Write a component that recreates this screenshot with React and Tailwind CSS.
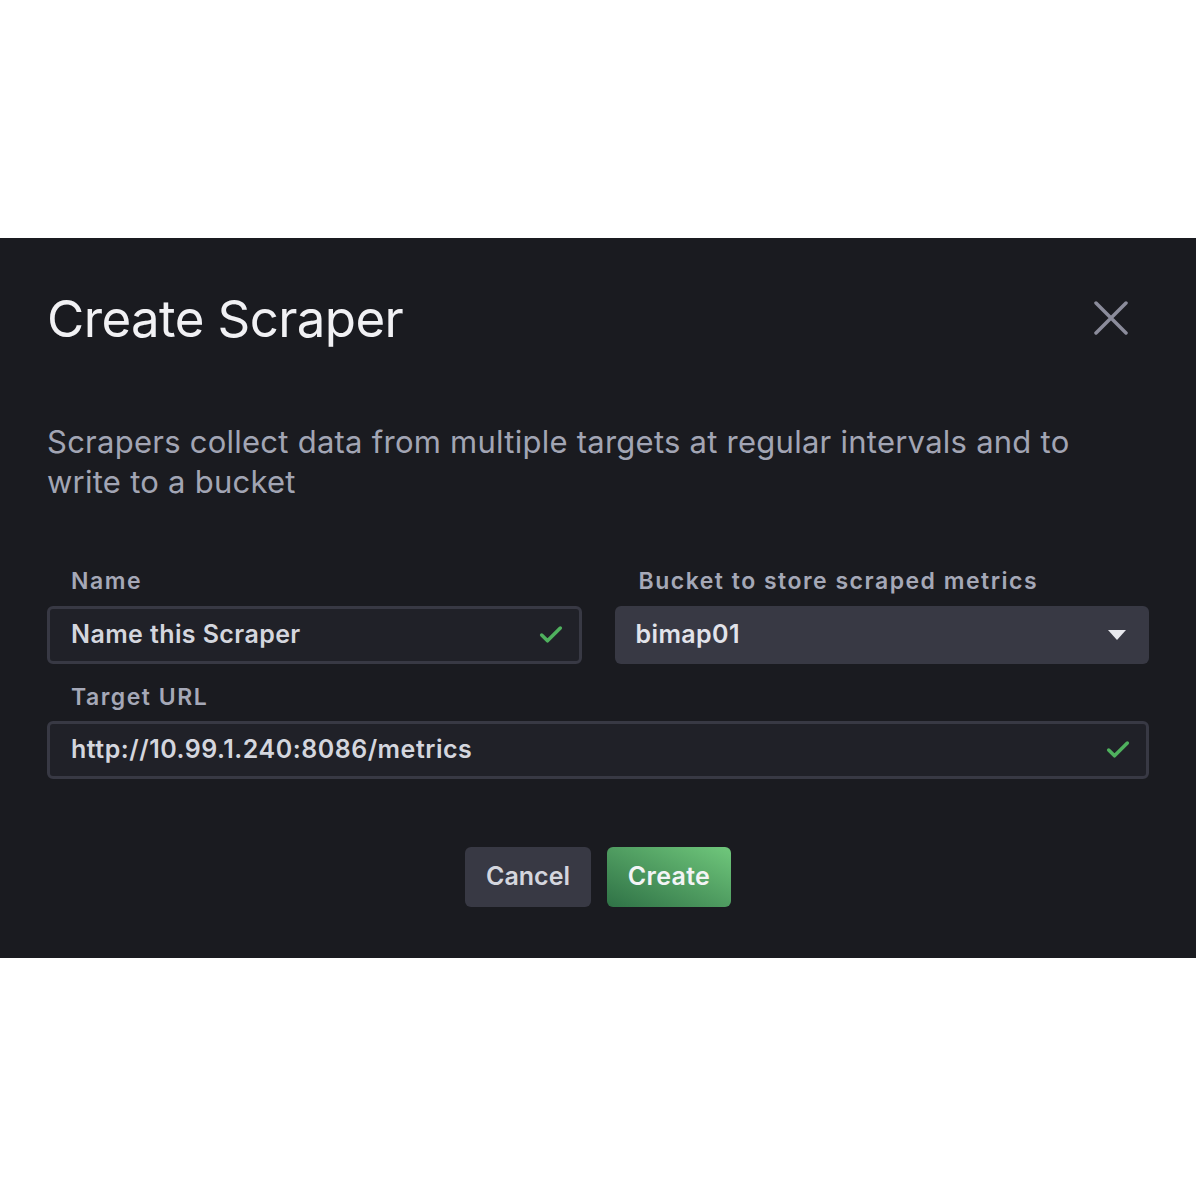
import { Check } from 'lucide-react';

export default function App() {
  return (
    <div className="min-h-[1196px] bg-white" style={{ fontFamily: 'Inter, "Noto Sans", sans-serif' }}>
      <div className="h-[238px]" />
      <div className="bg-[#1a1b20] px-[47px] pt-[46px] pb-[51px]">
        {/* header */}
        <div className="flex items-center justify-between h-[68px]">
          <h1 className="text-[51px] leading-none text-[#f1f1f4] tracking-[-0.6px]">Create Scraper</h1>
          <button className="mr-[21px]">
            <svg width="34" height="34" viewBox="0 0 34 34">
              <path d="M2 2 L32 32 M32 2 L2 32" stroke="#8b8c9b" strokeWidth="3.5" strokeLinecap="round" />
            </svg>
          </button>
        </div>

        <p className="mt-[70px] max-w-[1045px] text-[31px] leading-[40px] tracking-[0.25px] text-[#a2a5b4]">
          Scrapers collect data from multiple targets at regular intervals and to write to a bucket
        </p>

        <div className="mt-[65px] grid grid-cols-2 gap-x-[33px]">
          <div>
            <label className="block pl-[24px] text-[23px] font-semibold leading-[28px] tracking-[1.5px] text-[#a5a8b7]">
              Name
            </label>
            <div className="mt-[11px] flex h-[58px] items-center justify-between rounded-[6px] border-[3px] border-[#383944] bg-[#202128] pl-[21px] pr-[14px]">
              <span className="text-[25px] font-semibold tracking-[0.4px] text-[#d4d6de]">Name this Scraper</span>
              <Check size={28} strokeWidth={3} className="text-[#4fb15e]" />
            </div>
          </div>
          <div>
            <label className="block pl-[24px] text-[23px] font-semibold leading-[28px] tracking-[1.5px] text-[#a5a8b7]">
              Bucket to store scraped metrics
            </label>
            <div className="mt-[11px] flex h-[58px] items-center justify-between rounded-[6px] bg-[#383944] pl-[21px] pr-[22px]">
              <span className="text-[25px] font-semibold tracking-[0.4px] text-[#e2e3ea]">bimap01</span>
              <svg width="20" height="12" viewBox="0 0 20 12">
                <path d="M1 1 L19 1 L10 11 Z" fill="#e8e9ee" />
              </svg>
            </div>
          </div>
        </div>

        <label className="mt-[19px] block pl-[24px] text-[23px] font-semibold leading-[28px] tracking-[1.5px] text-[#a5a8b7]">
          Target URL
        </label>
        <div className="mt-[10px] flex h-[58px] items-center justify-between rounded-[6px] border-[3px] border-[#383944] bg-[#202128] pl-[21px] pr-[14px]">
          <span className="text-[25px] font-semibold tracking-[0.5px] text-[#d4d6de]">http://10.99.1.240:8086/metrics</span>
          <Check size={28} strokeWidth={3} className="text-[#4fb15e]" />
        </div>

        <div className="mt-[68px] flex justify-center gap-[16px]">
          <button className="h-[60px] w-[126px] rounded-[6px] bg-[#383944] text-[25px] font-semibold text-[#d4d6de]">
            Cancel
          </button>
          <button className="h-[60px] w-[124px] rounded-[6px] bg-gradient-to-tr from-[#2f7246] to-[#70c87c] text-[25px] font-semibold tracking-[0.3px] text-[#f3f4f6]">
            Create
          </button>
        </div>
      </div>
    </div>
  );
}
